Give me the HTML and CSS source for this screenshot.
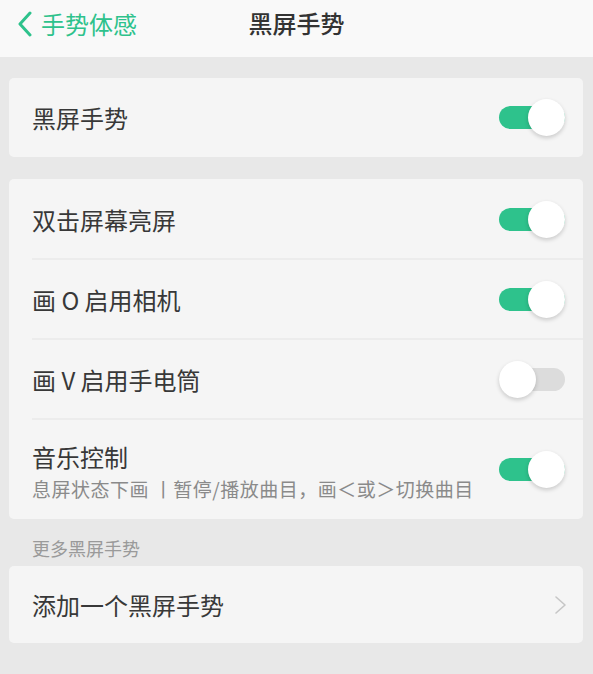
FILE: index.html
```html
<!DOCTYPE html>
<html lang="zh-CN">

<head>
    <meta charset="UTF-8">
    <meta name="viewport" content="width=device-width, initial-scale=1.0">
    <title>黑屏手势</title>
    <link rel="stylesheet" href="styles.css">
</head>

<body>
    <header class="topbar">
        <a class="back" href="#">
            <svg class="back-icon" width="16" height="26" viewBox="0 0 16 26">
                <path d="M13 2 L3 13 L13 24" fill="none" stroke="#2ec28c" stroke-width="3" stroke-linecap="round" stroke-linejoin="round"/>
            </svg>
            <span>手势体感</span>
        </a>
        <h1 class="title">黑屏手势</h1>
    </header>

    <main class="content">
        <section class="card">
            <div class="row">
                <span class="row-title">黑屏手势</span>
                <span class="switch on"></span>
            </div>
        </section>

        <section class="card card-list">
            <div class="row">
                <span class="row-title">双击屏幕亮屏</span>
                <span class="switch on"></span>
            </div>
            <div class="row">
                <span class="row-title">画 O 启用相机</span>
                <span class="switch on"></span>
            </div>
            <div class="row">
                <span class="row-title">画 V 启用手电筒</span>
                <span class="switch"></span>
            </div>
            <div class="row row-tall">
                <div class="row-text">
                    <span class="row-title">音乐控制</span>
                    <span class="row-sub">息屏状态下画 丨暂停/播放曲目，画＜或＞切换曲目</span>
                </div>
                <span class="switch on"></span>
            </div>
        </section>

        <p class="section-label">更多黑屏手势</p>

        <section class="card">
            <div class="row row-link">
                <span class="row-title">添加一个黑屏手势</span>
                <svg class="arrow" width="14" height="20" viewBox="0 0 14 20">
                    <path d="M3 2 L12 10 L3 18" fill="none" stroke="#c6c6c6" stroke-width="1.6" stroke-linecap="round" stroke-linejoin="round"/>
                </svg>
            </div>
        </section>
    </main>
</body>

</html>
```

FILE: styles.css
```css
* {
    box-sizing: border-box;
}

body {
    margin: 0;
    min-height: 674px;
    background-color: #e8e8e8;
    font-family: "Noto Sans CJK SC", "Noto Sans", sans-serif;
    color: #383838;
}

.topbar {
    position: relative;
    height: 57px;
    background-color: #f9f9f9;
    display: flex;
    align-items: center;
    justify-content: center;
}

.back {
    position: absolute;
    left: 17px;
    top: 11px;
    display: flex;
    align-items: center;
    gap: 8px;
    color: #2ec28c;
    font-size: 24px;
    line-height: 26px;
    text-decoration: none;
}

.title {
    margin: 0;
    font-size: 24px;
    font-weight: 500;
    color: #333;
    line-height: 1;
    transform: translateY(-6px);
}

.content {
    padding: 21px 10px 0 9px;
}

.card {
    background-color: #f5f5f5;
    border-radius: 5px;
    margin-bottom: 22px;
}

.row {
    height: 79px;
    padding: 0 18px 0 23px;
    display: flex;
    align-items: center;
    justify-content: space-between;
    position: relative;
}

.card-list .row {
    height: 80px;
}

.card .row + .row::before {
    content: "";
    position: absolute;
    left: 23px;
    right: 0;
    top: -1px;
    height: 2px;
    background-color: #ececec;
}

.row-title {
    font-size: 24px;
    line-height: 31px;
}

.card-list .row-tall {
    height: 100px;
}

.row-text {
    display: flex;
    flex-direction: column;
    gap: 5px;
    margin-top: 3px;
}

.row-sub {
    font-size: 19px;
    line-height: 24px;
    letter-spacing: 0.5px;
    color: #8a8a8a;
}

.switch {
    position: relative;
    width: 66px;
    height: 23px;
    border-radius: 12px;
    background-color: #dcdcdc;
    flex-shrink: 0;
}

.switch::after {
    content: "";
    position: absolute;
    left: 0;
    top: -7px;
    width: 37px;
    height: 37px;
    border-radius: 50%;
    background-color: #fff;
    box-shadow: 0 2px 4px rgba(0, 0, 0, 0.18);
}

.switch.on {
    background-color: #2ec28c;
}

.switch.on::after {
    left: 29px;
}

.section-label {
    margin: -22px 0 0 23px;
    height: 47px;
    padding-top: 16px;
    font-size: 18px;
    line-height: 26px;
    color: #9a9a9a;
}

.row-link {
    height: 77px;
    padding-right: 16px;
}
```
